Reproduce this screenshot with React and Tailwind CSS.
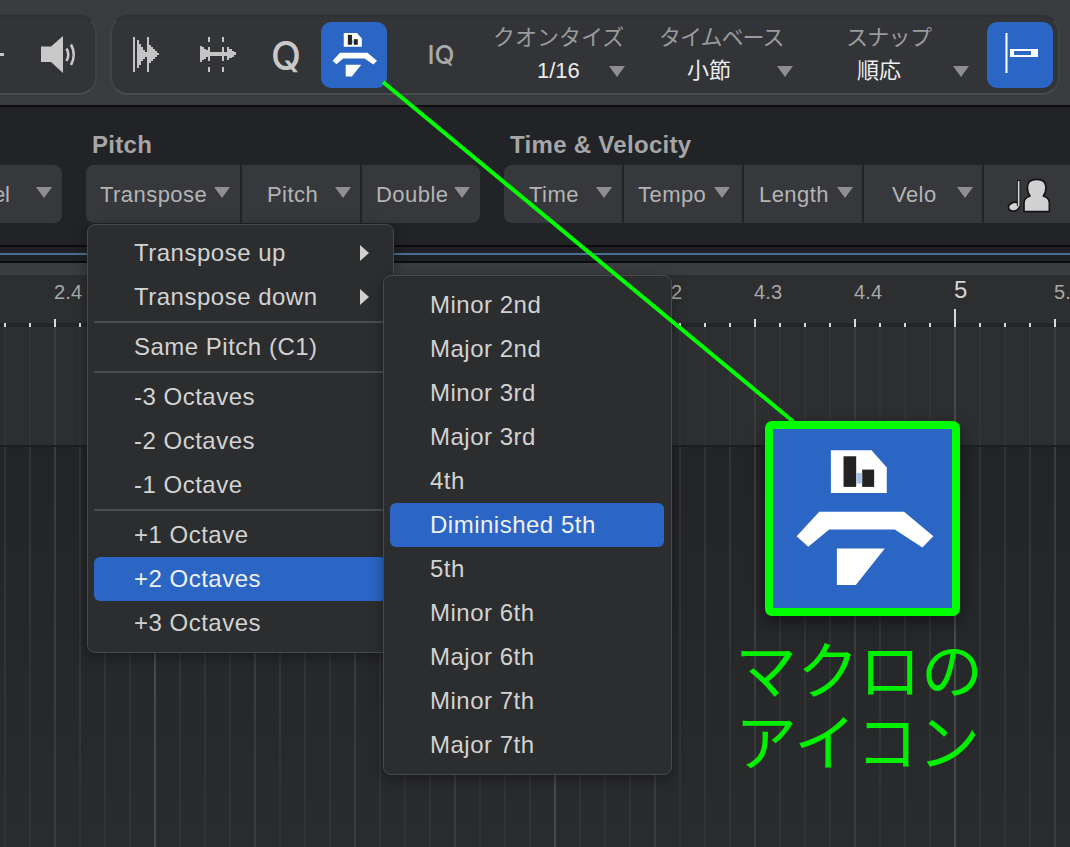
import React from "react";

const SANS = "font-['Liberation_Sans','Noto_Sans_CJK_JP',sans-serif]";

function Tri({ className = "" }) {
  return (
    <svg width="16" height="11" viewBox="0 0 16 11" className={`shrink-0 ${className}`}>
      <polygon points="0,0 16,0 8,11" fill="#8f8f8f" />
    </svg>
  );
}

function MacroIcon({ className }) {
  return (
    <svg viewBox="66 56 538 538" className={className}>
      <path d="M240 120H362L408 172V248H240Z" fill="#fff" />
      <rect x="278" y="138" width="38" height="92" fill="#232323" />
      <rect x="334" y="178" width="36" height="52" fill="#232323" />
      <rect x="316" y="188" width="18" height="32" fill="#a9c6ea" />
      <path d="M137 378L205 305H460L548 378L515 412L432 358H235L172 410Z" fill="#fff" />
      <path d="M258 415H402L315 525H258Z" fill="#fff" />
    </svg>
  );
}

function Speaker() {
  return (
    <svg width="38" height="38" viewBox="0 0 38 38">
      <path d="M1 10.5H11L23 0V37L11 26H1Z" fill="#c9c9c9" />
      <path d="M26.5 12.5Q30 18.5 26.5 25" stroke="#c9c9c9" strokeWidth="2.6" fill="none" />
      <path d="M31 8.5Q36.5 18.5 31 29" stroke="#c9c9c9" strokeWidth="2.6" fill="none" />
    </svg>
  );
}

function WaveIcon() {
  return (
    <svg width="34" height="38" viewBox="48 80 102 114" shapeRendering="crispEdges">
      <g fill="#c4c4c4">
        <rect x="48" y="82" width="6" height="106" />
        <rect x="90" y="82" width="6" height="106" />
        <path d="M60 92H66V104H72V114H78V122H84V128H90V142H84V148H78V156H72V166H66V176H60Z" />
        <path d="M97 106H102V114H108V120H114V126H120V130H127V138H120V142H114V148H108V154H102V162H97Z" />
      </g>
    </svg>
  );
}

function StretchIcon() {
  return (
    <svg width="38" height="38" viewBox="238 80 114 114" shapeRendering="crispEdges">
      <g fill="#c4c4c4">
        <rect x="264" y="82" width="6" height="16" />
        <rect x="264" y="112" width="6" height="42" />
        <rect x="264" y="172" width="6" height="16" />
        <rect x="306" y="82" width="6" height="16" />
        <rect x="306" y="112" width="6" height="42" />
        <rect x="306" y="172" width="6" height="16" />
        <rect x="262" y="127" width="66" height="12" />
        <path d="M240 110H246V114H252V118H258V122H264V144H258V148H252V152H246V158H240Z" />
        <path d="M322 114H328V120H336V124H342V128H348V138H342V142H336V146H328V152H322Z" />
      </g>
    </svg>
  );
}

function SingerIcon() {
  return (
    <svg width="60" height="50" viewBox="0 0 180 150" className="mt-[2px]">
      <ellipse cx="42" cy="110" rx="17" ry="13" fill="#d2d2d2" stroke="#141414" strokeWidth="5" transform="rotate(-20 42 110)" />
      <path d="M56 30V108" stroke="#141414" strokeWidth="11" />
      <path d="M56 33V108" stroke="#d2d2d2" strokeWidth="5" />
      <path d="M72 125V98Q72 84 90 78Q82 68 82 52Q82 28 110 28Q138 28 138 52Q138 68 130 78Q148 84 148 98V125Z" fill="#d2d2d2" stroke="#141414" strokeWidth="5" strokeLinejoin="round" />
    </svg>
  );
}

function QuantCol({ label, value, labelClass, rowClass, width }) {
  return (
    <div className={`flex flex-col items-start shrink-0 mt-[2px] ${width}`}>
      <div className={`text-[22px] leading-[30px] text-[#9b9b9b] whitespace-nowrap ${labelClass}`}>{label}</div>
      <div className={`flex items-center h-[36px] ${rowClass}`}>
        <span className="text-[22px] leading-[30px] text-[#ececec] whitespace-nowrap">{value}</span>
        <Tri />
      </div>
    </div>
  );
}

function IconBtn({ children, active }) {
  return (
    <div className={`w-[66px] h-[66px] shrink-0 flex items-center justify-center rounded-[10px] ${active ? "bg-[#2b66c4]" : ""}`}>
      {children}
    </div>
  );
}

function Cell({ label, width, pl, gap, round = "" }) {
  return (
    <div className={`h-[58px] flex items-center bg-[#37383c] shrink-0 ${width} ${pl} ${gap} ${round}`}>
      <span className="text-[22px] tracking-[0.45px] text-[#b4b4b4] whitespace-nowrap">{label}</span>
      <Tri className="-mt-[4px]" />
    </div>
  );
}

function Item({ children, active, arrow }) {
  return (
    <div className={`h-[44px] pl-[40px] flex items-center justify-between text-[24px] tracking-[0.5px] rounded-[6px] ${active ? "bg-[#2b66c4] text-[#f0f0f0]" : "text-[#d2d2d2]"}`}>
      <span className="whitespace-nowrap">{children}</span>
      {arrow && (
        <svg width="9" height="16" viewBox="0 0 9 16" className="mr-[18px]">
          <polygon points="0,0 9,8 0,16" fill="#d0d0d0" />
        </svg>
      )}
    </div>
  );
}

function Sep() {
  return (
    <div className="h-[6px] flex items-center">
      <div className="h-[2px] w-full bg-[#4b4c4f]" />
    </div>
  );
}

const COUNT = 43;
const idx = Array.from({ length: COUNT }, (_, i) => i);
const kind = (i) => ((i - 6) % 16 === 0 ? "bar" : i % 4 === 2 ? "beat" : "sub");
const LABELS = { 2: "2.4", 26: "4.2", 30: "4.3", 34: "4.4", 38: "5", 42: "5.2" };

function GridRow({ className }) {
  return (
    <div className={`flex pl-[4px] ${className}`}>
      {idx.map((i) => {
        const k = kind(i);
        return (
          <div
            key={i}
            className={`w-[25px] shrink-0 border-l-2 ${
              k === "bar" ? "border-[#48494b]" : k === "beat" ? "border-[#3b3c3e]" : "border-[#323335]"
            }`}
          />
        );
      })}
    </div>
  );
}

export default function App() {
  return (
    <div className={`relative w-[1070px] h-[847px] overflow-hidden bg-[#28292b] ${SANS}`}>
      {/* top toolbar */}
      <div className="h-[105px] bg-[#3a3b3f] pt-[15px] flex">
        <div className="w-[97px] h-[80px] shrink-0 bg-[#323437] rounded-r-[18px] border-t-2 border-b-2 border-r-2 border-t-[#2f3034] border-b-[#4a4b4e] border-r-[#414246] flex items-center justify-end pr-[17px] relative">
          <div className="absolute left-0 top-[36px] w-[4px] h-[3px] bg-[#c4c4c4]" />
          <Speaker />
        </div>
        <div className="ml-[13px] w-[950px] h-[80px] shrink-0 bg-[#323437] rounded-[18px] border-2 border-t-[#2f3034] border-b-[#4a4b4e] border-x-[#414246] flex items-center pl-[5px]">
          <div className="flex gap-[2px]">
            <IconBtn><WaveIcon /></IconBtn>
            <IconBtn><StretchIcon /></IconBtn>
            <IconBtn><span className="text-[39px] font-medium text-[#c8c8c8] leading-none font-['Inter',sans-serif]">Q</span></IconBtn>
            <IconBtn active><MacroIcon className="w-[58px] h-[58px]" /></IconBtn>
          </div>
          <div className="ml-[21px] mr-[16px]">
            <IconBtn><span className="text-[26px] font-medium text-[#aaaaaa] leading-none font-['Inter',sans-serif]">IQ</span></IconBtn>
          </div>
          <QuantCol label="クオンタイズ" value="1/16" width="w-[165px]" labelClass="ml-[3px]" rowClass="ml-[47px] gap-[29px]" />
          <QuantCol label="タイムベース" value="小節" width="w-[165px]" labelClass="ml-[4px] tracking-[-1px]" rowClass="ml-[32px] gap-[46px]" />
          <QuantCol label="スナップ" value="順応" width="w-[167px]" labelClass="ml-[26px] tracking-[-0.7px]" rowClass="ml-[37px] gap-[52px]" />
          <div className="w-[66px] h-[66px] shrink-0 rounded-[10px] bg-[#2b66c4] flex items-center justify-center">
            <svg width="66" height="66" viewBox="0 0 66 66">
              <rect x="18.5" y="11" width="2" height="40" fill="#fff" />
              <rect x="23" y="27" width="28" height="8" fill="#fff" />
              <rect x="27" y="29" width="17" height="4" fill="#2b66c4" />
            </svg>
          </div>
        </div>
      </div>
      <div className="h-[2px] bg-[#0e0e0f]" />

      {/* macro bar */}
      <div className="h-[138px] bg-[#222326] flex items-start">
        <div className="mt-[58px] w-[62px] h-[58px] shrink-0 bg-[#37383c] rounded-r-[8px] flex items-center justify-end pr-[10px] gap-[26px] overflow-hidden">
          <span className="text-[22px] text-[#b4b4b4]">el</span>
          <Tri className="-mt-[4px]" />
        </div>
        <div className="ml-[24px] w-[394px] shrink-0">
          <div className="h-[58px] pt-[22px] pl-[6px] text-[24px] leading-[32px] font-bold tracking-[0.3px] text-[#a6a6a6]">Pitch</div>
          <div className="flex gap-[2px]">
            <Cell label="Transpose" width="w-[154px]" pl="pl-[14px]" gap="gap-[7px]" round="rounded-l-[8px]" />
            <Cell label="Pitch" width="w-[118px]" pl="pl-[25px]" gap="gap-[17px]" />
            <Cell label="Double" width="w-[118px]" pl="pl-[14px]" gap="gap-[6px]" round="rounded-r-[8px]" />
          </div>
        </div>
        <div className="ml-[24px] flex-1 min-w-0">
          <div className="h-[58px] pt-[22px] pl-[6px] text-[24px] leading-[32px] font-bold tracking-[0.3px] text-[#a6a6a6] whitespace-nowrap">Time &amp; Velocity</div>
          <div className="flex gap-[2px]">
            <Cell label="Time" width="w-[118px]" pl="pl-[25px]" gap="gap-[17px]" round="rounded-l-[8px]" />
            <Cell label="Tempo" width="w-[118px]" pl="pl-[14px]" gap="gap-[8px]" />
            <Cell label="Length" width="w-[118px]" pl="pl-[15px]" gap="gap-[8px]" />
            <Cell label="Velo" width="w-[118px]" pl="pl-[28px]" gap="gap-[20px]" />
            <div className="h-[58px] flex-1 bg-[#37383c] flex items-center pl-[16px]">
              <SingerIcon />
            </div>
          </div>
        </div>
      </div>

      {/* separator strip */}
      <div className="h-[2px] bg-[#0c0c0d]" />
      <div className="h-[6px] bg-[#1f2023]" />
      <div className="h-[2px] bg-[#4a6d96]" />
      <div className="h-[6px] bg-[#1f2023]" />
      <div className="h-[2px] bg-[#0c0c0d]" />
      <div className="h-[12px] bg-[#3a3d40]" />

      {/* ruler */}
      <div className="h-[52px] flex pl-[4px] bg-[linear-gradient(#2d2e30_0,#2d2e30_48px,#242527_48px)]">
        {idx.map((i) => {
          const k = kind(i);
          return (
            <div key={i} className="w-[25px] shrink-0 relative flex items-end">
              <div className={`w-[2px] bg-[#d8d8d8] ${k === "bar" ? "h-[18px]" : k === "beat" ? "h-[8px]" : "h-[4px]"}`} />
              {LABELS[i] && (
                <span className={`absolute left-0 whitespace-nowrap ${k === "bar" ? "top-[1px] text-[24px] leading-[28px] text-[#d4d4d4]" : "top-[5px] text-[20px] tracking-[0.2px] leading-[24px] text-[#a8a8a8]"}`}>
                  {LABELS[i]}
                </span>
              )}
            </div>
          );
        })}
      </div>

      {/* grid */}
      <GridRow className="h-[118px] bg-[#2d2e30]" />
      <div className="h-[2px] bg-[#1d1e20]" />
      <GridRow className="h-[400px] bg-[linear-gradient(#232426,#2a2b2d)]" />

      {/* Transpose menu */}
      <div className="absolute left-[87px] top-[224px] w-[307px] h-[429px] bg-[#2c2d2f] border border-[#48494c] rounded-[8px] px-[6px] pt-[6px] shadow-[0_4px_14px_rgba(0,0,0,0.35)]">
        <Item arrow>Transpose up</Item>
        <Item arrow>Transpose down</Item>
        <Sep />
        <Item>Same Pitch (C1)</Item>
        <Sep />
        <Item>-3 Octaves</Item>
        <Item>-2 Octaves</Item>
        <Item>-1 Octave</Item>
        <Sep />
        <Item>+1 Octave</Item>
        <Item active>+2 Octaves</Item>
        <Item>+3 Octaves</Item>
      </div>

      {/* interval submenu */}
      <div className="absolute left-[383px] top-[275px] w-[289px] h-[500px] bg-[#2c2d2f] border border-[#48494c] rounded-[8px] pl-[6px] pr-[7px] pt-[7px] shadow-[0_4px_14px_rgba(0,0,0,0.35)]">
        {["Minor 2nd", "Major 2nd", "Minor 3rd", "Major 3rd", "4th", "Diminished 5th", "5th", "Minor 6th", "Major 6th", "Minor 7th", "Major 7th"].map((t) => (
          <Item key={t} active={t === "Diminished 5th"}>{t}</Item>
        ))}
      </div>

      {/* annotation */}
      <svg className="absolute left-0 top-0 pointer-events-none" width="1070" height="847">
        <line x1="383" y1="82" x2="795" y2="423" stroke="#00ff00" strokeWidth="4" />
      </svg>
      <div className="absolute left-[765px] top-[421px] w-[195px] h-[195px] border-[8px] border-[#00ff00] rounded-[7px] bg-[#2b66c4] shadow-[0_6px_16px_rgba(0,0,0,0.45)]">
        <MacroIcon className="w-full h-full" />
      </div>
      <div className="absolute left-[735px] top-[631px] w-[250px] text-[62px] leading-[72px] text-[#00f000] font-['Noto_Sans_CJK_JP',sans-serif] whitespace-nowrap">
        <div>マクロの</div>
        <div>アイコン</div>
      </div>
    </div>
  );
}
